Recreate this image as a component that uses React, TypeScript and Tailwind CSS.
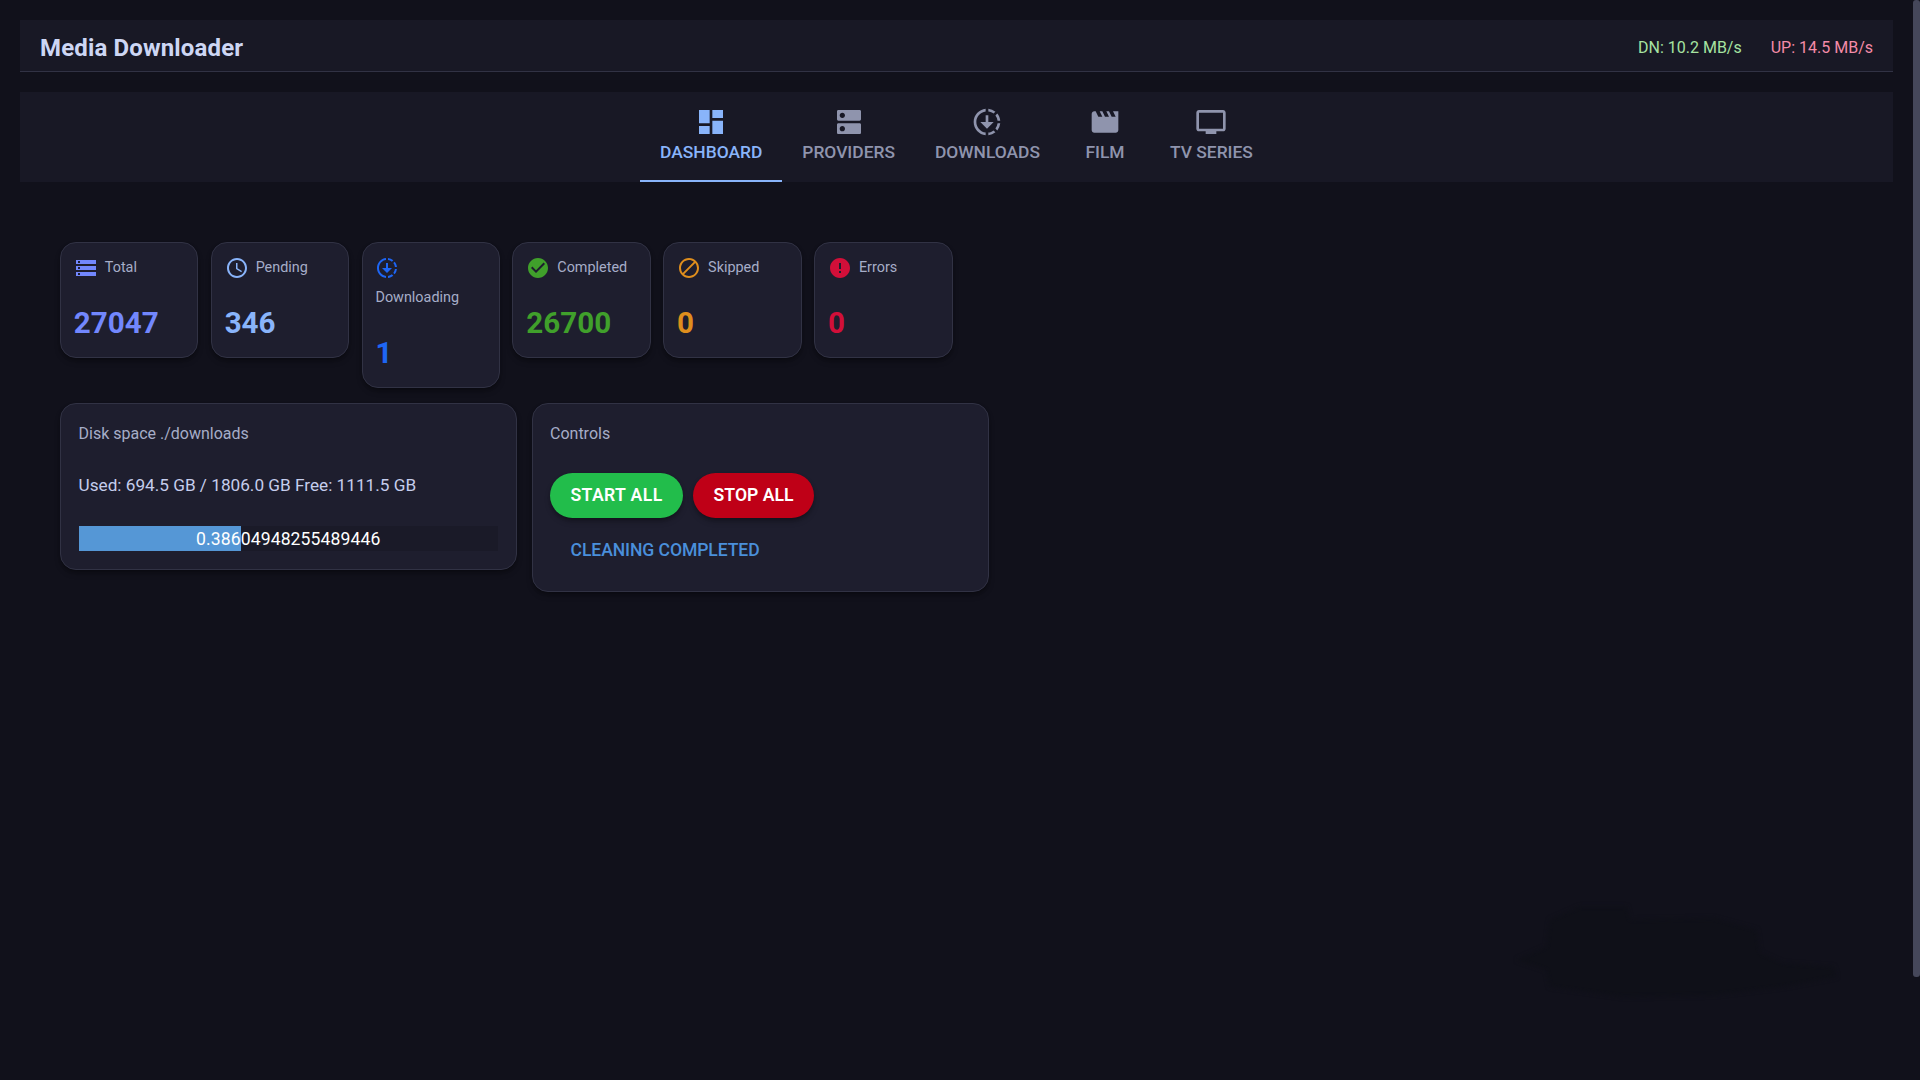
import { ReactNode } from "react";
import {
  MdBlock,
  MdCheckCircle,
  MdDashboard,
  MdDns,
  MdDownloading,
  MdError,
  MdMovie,
  MdSchedule,
  MdStorage,
  MdTv,
} from "react-icons/md";

type Stat = { label: string; value: string; color: string; icon: ReactNode };

const tabs = [
  { label: "DASHBOARD", icon: <MdDashboard size={32} />, active: true },
  { label: "PROVIDERS", icon: <MdDns size={32} />, active: false },
  { label: "DOWNLOADS", icon: <MdDownloading size={32} />, active: false },
  { label: "FILM", icon: <MdMovie size={32} />, active: false },
  { label: "TV SERIES", icon: <MdTv size={32} />, active: false },
];

const stats: Stat[] = [
  { label: "Total", value: "27047", color: "text-[#7287fd]", icon: <MdStorage size={24} /> },
  { label: "Pending", value: "346", color: "text-[#89b4fa]", icon: <MdSchedule size={24} /> },
  { label: "Downloading", value: "1", color: "text-[#1e66f5]", icon: <MdDownloading size={24} /> },
  { label: "Completed", value: "26700", color: "text-[#40a02b]", icon: <MdCheckCircle size={24} /> },
  { label: "Skipped", value: "0", color: "text-[#df8e1d]", icon: <MdBlock size={24} /> },
  { label: "Errors", value: "0", color: "text-[#d20f39]", icon: <MdError size={24} /> },
];

function StatCard({ stat }: { stat: Stat }) {
  return (
    <div className="w-[138.4px] shrink-0 rounded-2xl border border-[#313244] bg-[#1e1e2e] p-[12.8px] shadow-md shadow-black/30">
      <div className="flex flex-wrap items-center gap-y-[6px]">
        <span className={`mr-[7px] h-6 w-6 ${stat.color}`}>{stat.icon}</span>
        <span className="text-[14.4px] leading-6 text-[#a6adc8]">{stat.label}</span>
      </div>
      <div className={`mt-[22px] text-[29.6px] leading-[42px] font-bold ${stat.color}`}>{stat.value}</div>
    </div>
  );
}

export default function App() {
  return (
    <div className="relative flex h-screen overflow-hidden bg-[#11111b] font-[Roboto,sans-serif]">
      <div className="min-w-0 flex-1 p-5">
        <header className="flex h-[52px] items-center justify-between border-b border-[#313244] bg-[#181825] px-5 pt-1">
          <h1 className="text-2xl font-bold tracking-[0.15px] text-[#cdd6f4]">Media Downloader</h1>
          <div className="flex gap-[29px] text-base">
            <span className="text-[#a6e3a1]">DN: 10.2 MB/s</span>
            <span className="text-[#f38ba8]">UP: 14.5 MB/s</span>
          </div>
        </header>

        <nav className="mt-5 flex h-[90px] justify-center bg-[#181825]">
          {tabs.map((tab) => (
            <div
              key={tab.label}
              className={`flex min-w-[90px] flex-col items-center border-b-2 px-5 pt-[14px] ${
                tab.active ? "border-[#89b4fa] text-[#89b4fa]" : "border-transparent text-[#8f94ad]"
              }`}
            >
              {tab.icon}
              <span className="mt-[2px] text-[17.4px] leading-6 font-medium">{tab.label}</span>
            </div>
          ))}
        </nav>

        <main className="mt-[60px] px-10">
          <div className="flex items-start gap-[12.45px]">
            {stats.map((stat) => (
              <StatCard key={stat.label} stat={stat} />
            ))}
          </div>

          <div className="mt-[15.4px] flex items-start gap-[15px]">
            <section className="w-[457px] rounded-2xl border border-[#313244] bg-[#1e1e2e] pt-[19.6px] pr-[18px] pb-[17.6px] pl-[17.5px] shadow-md shadow-black/30">
              <div className="text-base leading-5 text-[#a6adc8]">Disk space ./downloads</div>
              <div className="mt-[31px] text-[17.2px] leading-5 text-[#c5cdec]">Used: 694.5 GB / 1806.0 GB Free: 1111.5 GB</div>
              <div className="relative mt-[31.4px] h-[25px] bg-[#1a1a28]">
                <div className="h-full w-[38.75%] bg-[#5597d6]"></div>
                <div className="absolute inset-0 text-center text-[17.6px] leading-[26px] tracking-[0.1px] text-white">
                  0.38604948255489446
                </div>
              </div>
            </section>

            <section className="w-[457px] rounded-2xl border border-[#313244] bg-[#1e1e2e] pt-[19.6px] pr-[18px] pb-[18px] pl-[17px] shadow-md shadow-black/30">
              <div className="text-base leading-5 text-[#a6adc8]">Controls</div>
              <div className="mt-[29.4px] flex gap-[10px]">
                <button className="h-[45px] w-[133px] rounded-full bg-[#22bd4b] text-[17.6px] font-semibold tracking-[0.4px] text-white shadow-md shadow-black/30">
                  START ALL
                </button>
                <button className="h-[45px] w-[121px] rounded-full bg-[#bf0017] text-[17.6px] font-semibold text-white shadow-md shadow-black/30">
                  STOP ALL
                </button>
              </div>
              <button className="mt-[9.6px] h-[45px] px-[20.5px] text-[17.6px] font-medium tracking-[-0.1px] text-[#4a8fdb]">
                CLEANING COMPLETED
              </button>
            </section>
          </div>
        </main>
      </div>

      <aside className="w-[7px] shrink-0">
        <div className="h-[977px] rounded-[3px] bg-[#45475a]"></div>
      </aside>

      {/* faint dark smudge in the lower right corner */}
      <svg className="absolute top-[880px] left-[1480px] h-[200px] w-[433px] blur-[2px]" viewBox="0 0 1299 600">
        <path
          d="M110 240 L200 200 L210 120 L300 80 L440 80 L450 120 L700 115 L830 150 L840 220 L910 250 L1060 260 L1070 290 L910 320 L700 345 L430 350 L210 320 L200 270 Z"
          fill="#0f1018"
        />
      </svg>
    </div>
  );
}
